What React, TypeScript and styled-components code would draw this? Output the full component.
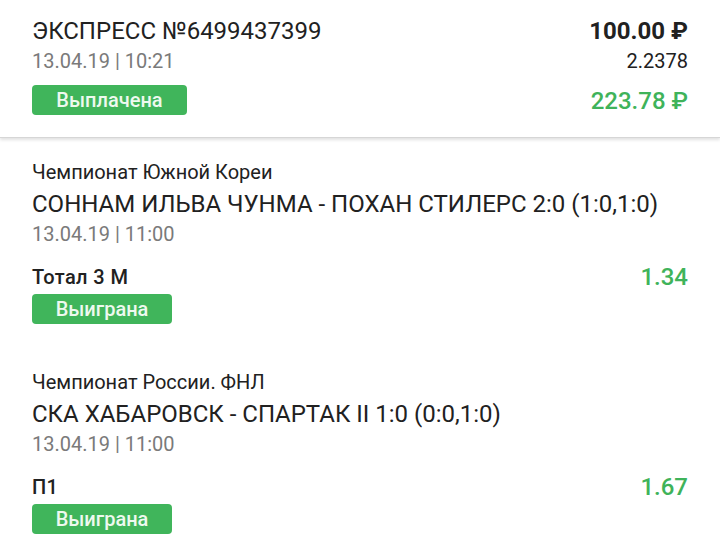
import styled, { createGlobalStyle } from "styled-components";

const GlobalStyle = createGlobalStyle`
  html, body {
    margin: 0;
    padding: 0;
    background: #ffffff;
  }
  body {
    font-family: Roboto, "Noto Sans", sans-serif;
    color: #212121;
  }
`;

type Event = {
  league: string;
  match: string;
  date: string;
  market: string;
  odds: string;
};

const events: Event[] = [
  {
    league: "Чемпионат Южной Кореи",
    match: "СОННАМ ИЛЬВА ЧУНМА - ПОХАН СТИЛЕРС 2:0 (1:0,1:0)",
    date: "13.04.19 | 11:00",
    market: "Тотал 3 М",
    odds: "1.34",
  },
  {
    league: "Чемпионат России. ФНЛ",
    match: "СКА ХАБАРОВСК - СПАРТАК II 1:0 (0:0,1:0)",
    date: "13.04.19 | 11:00",
    market: "П1",
    odds: "1.67",
  },
];

const App = () => {
  return (
    <Page>
      <GlobalStyle />
      <Header>
        <HeaderLeft>
          <Title>ЭКСПРЕСС №6499437399</Title>
          <DateText>13.04.19 | 10:21</DateText>
          <Badge $width={155} $gap={11}>Выплачена</Badge>
        </HeaderLeft>
        <HeaderRight>
          <Stake>100.00 ₽</Stake>
          <TotalOdds>2.2378</TotalOdds>
          <Payout>223.78 ₽</Payout>
        </HeaderRight>
      </Header>
      <List>
        {events.map((ev) => (
          <EventBlock key={ev.match}>
            <League>{ev.league}</League>
            <Match>{ev.match}</Match>
            <DateText>{ev.date}</DateText>
            <MarketRow>
              <Market>{ev.market}</Market>
              <Odds>{ev.odds}</Odds>
            </MarketRow>
            <Badge $width={140} $gap={4}>Выиграна</Badge>
          </EventBlock>
        ))}
      </List>
    </Page>
  );
};

const Page = styled.div`
  width: 720px;
  height: 549px;
  overflow: hidden;
  background: #ffffff;
`;

const Header = styled.div`
  display: flex;
  justify-content: space-between;
  padding: 16px 32px 21px 32px;
  height: 100px;
  border-bottom: 1px solid #d6d6d6;
  box-shadow: 0 2px 3px rgba(0, 0, 0, 0.12);
  position: relative;
`;

const HeaderLeft = styled.div`
  display: flex;
  flex-direction: column;
`;

const HeaderRight = styled.div`
  display: flex;
  flex-direction: column;
  align-items: flex-end;
`;

const Title = styled.div`
  font-size: 24px;
  line-height: 30px;
  color: #212121;
`;

const DateText = styled.div`
  font-size: 20px;
  line-height: 26px;
  color: #7a7a7a;
  margin-top: 2px;
`;

const Badge = styled.div<{ $width: number; $gap: number }>`
  width: ${(p) => p.$width}px;
  height: 30px;
  margin-top: ${(p) => p.$gap}px;
  border-radius: 4px;
  background: #40b55b;
  color: #eef9ef;
  font-size: 20px;
  font-weight: 500;
  display: flex;
  align-items: center;
  justify-content: center;
`;

const Stake = styled.div`
  font-size: 24px;
  line-height: 30px;
  font-weight: 700;
  color: #212121;
`;

const TotalOdds = styled.div`
  font-size: 20px;
  line-height: 26px;
  color: #212121;
  margin-top: 2px;
`;

const Payout = styled.div`
  font-size: 24px;
  line-height: 30px;
  font-weight: 500;
  color: #3fb35a;
  margin-top: 12px;
`;

const List = styled.div`
  display: flex;
  flex-direction: column;
  gap: 45px;
  padding: 21px 32px 0 32px;
`;

const EventBlock = styled.div`
  display: flex;
  flex-direction: column;
`;

const League = styled.div`
  font-size: 20px;
  line-height: 26px;
  color: #212121;
`;

const Match = styled.div`
  font-size: 24px;
  line-height: 30px;
  color: #212121;
  margin-top: 4px;
  white-space: nowrap;
`;

const MarketRow = styled.div`
  display: flex;
  justify-content: space-between;
  align-items: center;
  margin-top: 17px;
  height: 26px;
`;

const Market = styled.div`
  font-size: 20px;
  font-weight: 500;
  letter-spacing: 0.4px;
  color: #212121;
`;

const Odds = styled.div`
  font-size: 24px;
  font-weight: 500;
  color: #3fb35a;
`;

export default App;
